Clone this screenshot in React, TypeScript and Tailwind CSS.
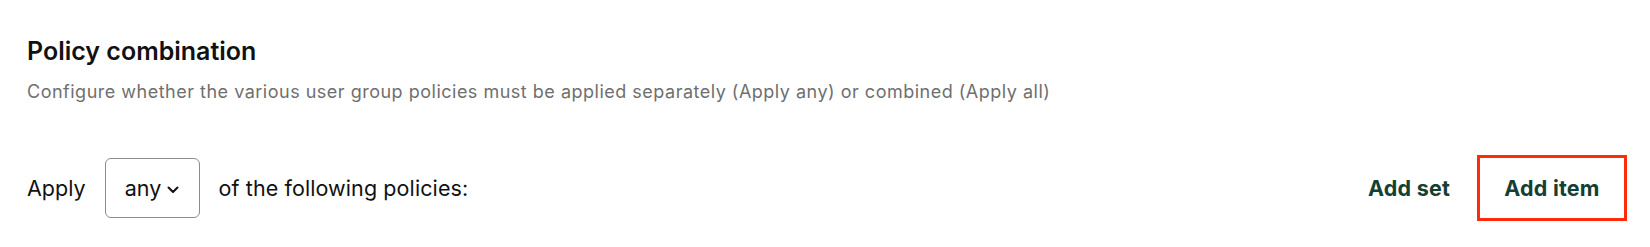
export default function App() {
  return (
    <div className="min-h-[247px] bg-white pl-[27px] pr-[23px] pt-[36px] font-['Inter',sans-serif]">
      <h2 className="text-[25px] font-semibold leading-[30px] text-[#111111]">Policy combination</h2>
      <p className="mt-[14px] text-[18px] leading-[24px] tracking-[0.5px] text-[#6f6f6f]">
        Configure whether the various user group policies must be applied separately (Apply any) or combined (Apply all)
      </p>

      <div className="mt-[51px] flex items-center justify-between">
        <div className="flex items-center text-[21.5px] text-[#111111]">
          <span>Apply</span>
          <button className="ml-[19px] flex h-[60px] w-[95px] items-center justify-center gap-[6px] rounded-[6px] border border-[#8c8c8c] bg-white">
            <span>any</span>
            <svg width="12" height="8" viewBox="0 0 12 8" fill="none" className="mt-[4px]">
              <path d="M1.5 1.5L6 6L10.5 1.5" stroke="#111111" strokeWidth="2" strokeLinecap="round" strokeLinejoin="round" />
            </svg>
          </button>
          <span className="ml-[19px] tracking-[0.1px]">of the following policies:</span>
        </div>

        <div className="flex items-center text-[21.5px] font-bold tracking-[0.2px] text-[#153f33]">
          <button className="px-[24px]">Add set</button>
          <button className="ml-[3px] h-[66px] w-[150px] border-[3px] border-[#ff2a0a]">Add item</button>
        </div>
      </div>
    </div>
  );
}
